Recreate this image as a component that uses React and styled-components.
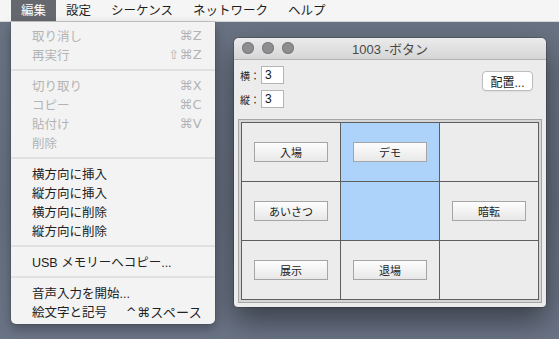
import React from 'react'
import styled, { createGlobalStyle } from 'styled-components'

const GlobalStyle = createGlobalStyle`
  html, body {
    margin: 0;
    padding: 0;
  }
  body {
    font-family: "Liberation Sans", "Noto Sans CJK JP", "DejaVu Sans", sans-serif;
  }
`

const Desktop = styled.div`
  position: relative;
  width: 559px;
  height: 339px;
  overflow: hidden;
  background: linear-gradient(180deg, #6a7383 0%, #646d7d 60%, #6b7486 100%);
`

const MenuBar = styled.div`
  display: flex;
  height: 22px;
  padding-left: 11px;
  background: #f5f5f5;
  border-bottom: 1px solid #d6d6d6;
  box-sizing: border-box;
`

const MenuTitle = styled.div`
  padding: 0 10px;
  line-height: 22px;
  font-size: 12.5px;
  color: ${p => (p.$active ? '#ffffff' : '#1e1e1e')};
  background: ${p => (p.$active ? '#65686f' : 'transparent')};
`

const Dropdown = styled.div`
  position: absolute;
  left: 11px;
  top: 22px;
  width: 204px;
  padding: 4px 0 3px;
  background: #f3f3f3;
  border-radius: 0 0 5px 5px;
  box-shadow: 0 5px 12px rgba(0, 0, 0, 0.3), 0 0 0 1px rgba(0, 0, 0, 0.08);
  z-index: 3;
`

const Item = styled.div`
  display: flex;
  justify-content: space-between;
  align-items: center;
  height: 19px;
  padding: 0 13px 0 21px;
  font-size: 12.5px;
  color: ${p => (p.$disabled ? '#b3b3b3' : '#222222')};
`

const Shortcut = styled.span`
  font-family: "DejaVu Sans", "Noto Sans CJK JP", sans-serif;
  font-size: 13px;
  letter-spacing: 0.3px;
`

const Separator = styled.div`
  height: 2px;
  margin: 5px 0;
  background: #e1e1e1;
`

const Window = styled.div`
  position: absolute;
  left: 234px;
  top: 38px;
  width: 312px;
  height: 269px;
  display: flex;
  flex-direction: column;
  background: #ececec;
  border-radius: 5px 5px 4px 4px;
  overflow: hidden;
  box-shadow: 0 14px 30px rgba(0, 0, 0, 0.45), 0 0 0 1px rgba(0, 0, 0, 0.18);
  z-index: 2;
`

const TitleBar = styled.div`
  position: relative;
  display: flex;
  align-items: center;
  justify-content: center;
  height: 21px;
  flex-shrink: 0;
  background: linear-gradient(180deg, #ebebeb 0%, #d6d6d6 100%);
  border-bottom: 1px solid #b3b3b3;
  font-size: 13px;
  color: #4a4a4a;
`

const Lights = styled.div`
  position: absolute;
  left: 8px;
  top: 4px;
  display: flex;
  gap: 8px;
`

const Light = styled.span`
  width: 12px;
  height: 12px;
  border-radius: 50%;
  background: #8e8e91;
  box-shadow: inset 0 0 0 1px #7c7c80;
`

const Controls = styled.div`
  display: flex;
  justify-content: space-between;
  align-items: flex-start;
  height: 59px;
  padding: 6px 13px 0 6px;
  box-sizing: border-box;
`

const Fields = styled.div`
  display: flex;
  flex-direction: column;
  gap: 6px;
`

const Field = styled.div`
  display: flex;
  align-items: center;
`

const Label = styled.span`
  width: 21px;
  font-size: 10px;
  color: #222;
  white-space: nowrap;
`

const NumBox = styled.div`
  width: 23px;
  height: 18px;
  box-sizing: border-box;
  padding-left: 3px;
  background: #fff;
  border: 1px solid #b4b4b4;
  font-size: 12px;
  line-height: 16px;
  color: #111;
`

const PushButton = styled.div`
  margin-top: 5px;
  width: 51px;
  height: 20px;
  box-sizing: border-box;
  display: flex;
  align-items: center;
  justify-content: center;
  background: #fff;
  border: 1px solid #bcbcbc;
  border-radius: 4px;
  box-shadow: 0 1px 1px rgba(0, 0, 0, 0.06);
  font-size: 12px;
  color: #222;
`

const Frame = styled.div`
  margin: 0 4px;
  padding: 2px;
  background: #d6d6d6;
  border: 1px solid #a6a6a6;
`

const Grid = styled.div`
  display: grid;
  grid-template-columns: repeat(3, 98px);
  grid-template-rows: repeat(3, 58px);
  gap: 1px;
  background: #5e5e5e;
  border: 1px solid #5e5e5e;
  width: max-content;
`

const Cell = styled.div`
  display: flex;
  align-items: center;
  justify-content: center;
  background: ${p => (p.$selected ? '#aed3fb' : '#ececec')};
`

const CellButton = styled.div`
  width: 74px;
  height: 20px;
  box-sizing: border-box;
  display: flex;
  align-items: center;
  justify-content: center;
  background: linear-gradient(180deg, #fdfdfd 0%, #e8e8e8 100%);
  border: 1px solid #a5a5a5;
  font-size: 11px;
  color: #222;
`

const menuGroups = [
  [
    { label: '取り消し', key: '⌘Z', disabled: true },
    { label: '再実行', key: '⇧⌘Z', disabled: true },
  ],
  [
    { label: '切り取り', key: '⌘X', disabled: true },
    { label: 'コピー', key: '⌘C', disabled: true },
    { label: '貼付け', key: '⌘V', disabled: true },
    { label: '削除', disabled: true },
  ],
  [
    { label: '横方向に挿入' },
    { label: '縦方向に挿入' },
    { label: '横方向に削除' },
    { label: '縦方向に削除' },
  ],
  [{ label: 'USB メモリーへコピー...' }],
  [
    { label: '音声入力を開始...' },
    { label: '絵文字と記号', key: '^⌘スペース' },
  ],
]

const cells = [
  { text: '入場' },
  { text: 'デモ', selected: true },
  {},
  { text: 'あいさつ' },
  { selected: true },
  { text: '暗転' },
  { text: '展示' },
  { text: '退場' },
  {},
]

const App = () => {
  return (
    <>
      <GlobalStyle />
      <Desktop>
        <MenuBar>
          <MenuTitle $active>編集</MenuTitle>
          <MenuTitle>設定</MenuTitle>
          <MenuTitle>シーケンス</MenuTitle>
          <MenuTitle>ネットワーク</MenuTitle>
          <MenuTitle>ヘルプ</MenuTitle>
        </MenuBar>

        <Dropdown>
          {menuGroups.map((group, gi) => (
            <React.Fragment key={gi}>
              {gi > 0 && <Separator />}
              {group.map(item => (
                <Item key={item.label} $disabled={item.disabled}>
                  <span>{item.label}</span>
                  {item.key && <Shortcut>{item.key}</Shortcut>}
                </Item>
              ))}
            </React.Fragment>
          ))}
        </Dropdown>

        <Window>
          <TitleBar>
            <Lights>
              <Light />
              <Light />
              <Light />
            </Lights>
            1003 -ボタン
          </TitleBar>
          <Controls>
            <Fields>
              <Field>
                <Label>横：</Label>
                <NumBox>3</NumBox>
              </Field>
              <Field>
                <Label>縦：</Label>
                <NumBox>3</NumBox>
              </Field>
            </Fields>
            <PushButton>配置...</PushButton>
          </Controls>
          <Frame>
            <Grid>
              {cells.map((c, i) => (
                <Cell key={i} $selected={c.selected}>
                  {c.text && <CellButton>{c.text}</CellButton>}
                </Cell>
              ))}
            </Grid>
          </Frame>
        </Window>
      </Desktop>
    </>
  )
}

export default App
